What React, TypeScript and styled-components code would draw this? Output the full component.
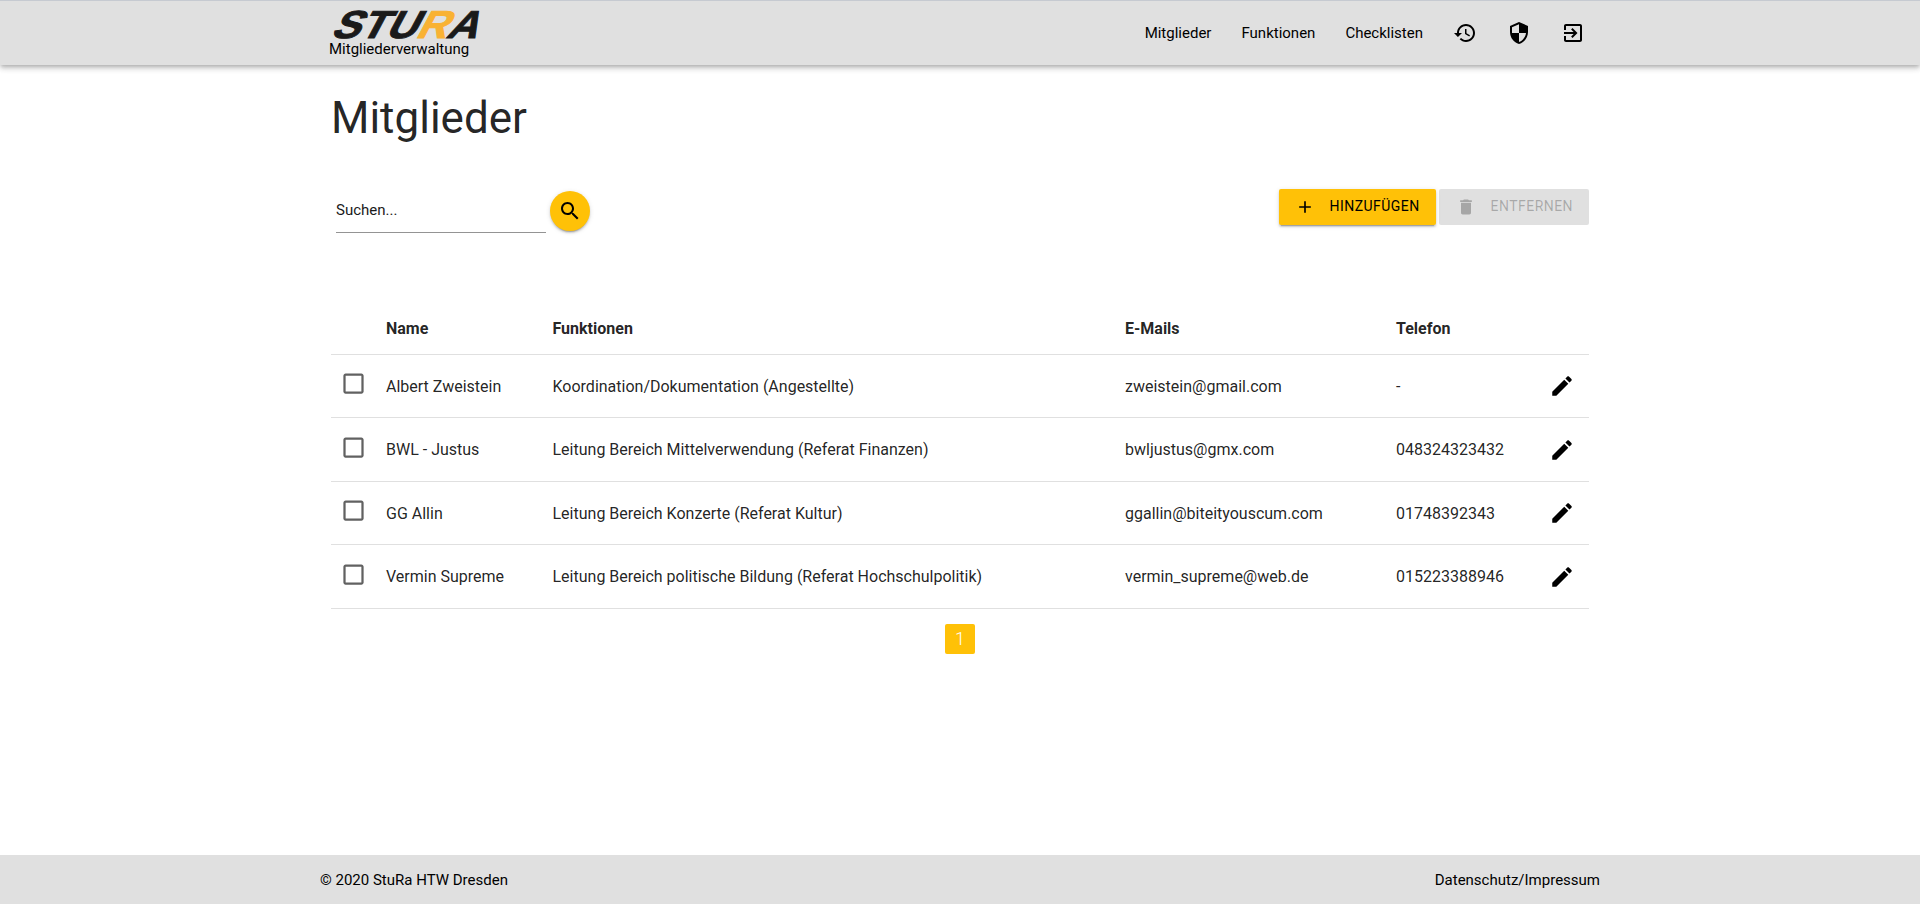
import React from "react";
import styled, { createGlobalStyle } from "styled-components";

const GlobalStyle = createGlobalStyle`
  html, body { margin: 0; padding: 0; }
  body { font-family: Roboto, "Liberation Sans", sans-serif; font-size: 16px; color: rgba(0,0,0,.87); background: #fff; }
  * { box-sizing: border-box; }
`;

const Page = styled.div`
  min-height: 904px;
  display: flex;
  flex-direction: column;
`;
const Header = styled.header`
  height: 65px;
  background: #e0e0e0;
  border-top: 1px solid #c6cad1;
  box-shadow: 0 2px 4px -1px rgba(0,0,0,.2), 0 4px 5px 0 rgba(0,0,0,.14), 0 1px 10px 0 rgba(0,0,0,.06);
  position: relative;
  z-index: 1;
`;
const HeaderInner = styled.div`
  width: 1280px;
  height: 100%;
  margin: 0 auto;
  display: flex;
  justify-content: space-between;
  align-items: flex-start;
`;
const Brand = styled.a`
  display: flex;
  flex-direction: column;
  padding: 9px 0 0 9px;
  color: #000;
`;
const BrandCaption = styled.span`
  font-size: 15px;
  line-height: 15px;
  color: #000;
`;
const LogoSvg = styled.svg`
  display: block;
  overflow: visible;
`;
const Nav = styled.nav`
  display: flex;
  align-items: center;
  height: 64px;
`;
const NavLink = styled.a`
  padding: 0 15px;
  font-size: 15px;
  color: #000;
  line-height: 20px;
`;
const NavIcon = styled.a`
  padding: 0 15px;
  display: flex;
  color: #000;
`;
const Main = styled.main`
  flex: 1;
  width: 1280px;
  margin: 0 auto;
  padding: 25px 10px 0;
`;
const Title = styled.h1`
  margin: 0 0 43px 1px;
  font-size: 44px;
  line-height: 56px;
  font-weight: 400;
  color: rgba(0,0,0,.87);
`;
const Toolbar = styled.div`
  display: flex;
  justify-content: space-between;
  align-items: flex-start;
  width: 1258px;
  height: 113px;
  margin-left: 1px;
`;
const SearchGroup = styled.div`
  display: flex;
  align-items: flex-start;
  padding: 2px 0 0 5px;
`;
const SearchField = styled.div`
  width: 210px;
  height: 42px;
  border-bottom: 1px solid #949494;
  display: flex;
  align-items: center;
  padding-bottom: 4px;
  font-size: 15px;
  color: #1a1a1a;
`;
const SearchButton = styled.button`
  width: 40px;
  height: 40px;
  margin-left: 4px;
  border: 0;
  padding: 0;
  border-radius: 50%;
  background: #ffc107;
  color: #000;
  display: flex;
  align-items: center;
  justify-content: center;
  box-shadow: 0 3px 1px -2px rgba(0,0,0,.2), 0 2px 2px 0 rgba(0,0,0,.14), 0 1px 5px 0 rgba(0,0,0,.12);
`;
const Actions = styled.div`
  display: flex;
  gap: 3px;
`;
const ActionButton = styled.button<{ $disabled?: boolean }>`
  height: 36px;
  padding: 0 16px 0 ${(p) => (p.$disabled ? 17 : 16)}px;
  border: 0;
  border-radius: 2px;
  display: flex;
  align-items: center;
  gap: 15px;
  font-family: Roboto, sans-serif;
  font-size: 14px;
  font-weight: 400;
  letter-spacing: .45px;
  text-transform: uppercase;
  background: ${(p) => (p.$disabled ? "rgba(0,0,0,.12)" : "#ffc107")};
  color: ${(p) => (p.$disabled ? "rgba(0,0,0,.26)" : "#000")};
  box-shadow: ${(p) =>
    p.$disabled
      ? "none"
      : "0 3px 1px -2px rgba(0,0,0,.2), 0 2px 2px 0 rgba(0,0,0,.14), 0 1px 5px 0 rgba(0,0,0,.12)"};
`;
const ButtonLabel = styled.span`
  margin-bottom: 2px;
`;
const Table = styled.table`
  width: 1258px;
  margin-left: 1px;
  table-layout: fixed;
  border-collapse: collapse;
`;
const HeadCell = styled.th<{ $w: number }>`
  width: ${(p) => p.$w}px;
  height: 52px;
  padding: 2px 16px 0;
  text-align: left;
  font-size: 16px;
  font-weight: 700;
  color: rgba(0,0,0,.87);
  border-bottom: 1px solid #e0e0e0;
`;
const Row = styled.tr`
  &:nth-child(odd) td { height: 63px; }
`;
const Cell = styled.td`
  height: 64px;
  padding: 1px 16px 0;
  font-size: 16px;
  color: rgba(0,0,0,.87);
  border-bottom: 1px solid #e0e0e0;
  vertical-align: middle;
`;
const CheckCell = styled(Cell)`
  padding: 0 0 4px 9px;
`;
const EditCell = styled(Cell)`
  padding: 1px 14px 0 0;
`;
const CheckIcon = styled.svg`
  display: block;
  color: #616161;
`;
const EditIcon = styled.svg`
  display: block;
  margin-left: auto;
  color: #000;
`;
const Pagination = styled.div`
  display: flex;
  justify-content: center;
  margin-top: 15px;
`;
const PageButton = styled.button`
  width: 30px;
  height: 30px;
  padding: 0;
  border: 0;
  border-radius: 2px;
  background: #ffc107;
  color: #fff;
  font-family: Roboto, sans-serif;
  font-size: 18px;
  font-weight: 300;
`;
const Footer = styled.footer`
  height: 49px;
  background: #e0e0e0;
`;
const FooterInner = styled.div`
  width: 1280px;
  height: 100%;
  margin: 0 auto;
  display: flex;
  align-items: center;
  justify-content: space-between;
  font-size: 15px;
  color: #000;
`;

const Icon = ({ d, size = 24, as: As = "svg" as any }: { d: string; size?: number; as?: any }) => (
  <As width={size} height={size} viewBox="0 0 24 24" fill="currentColor" aria-hidden="true">
    <path d={d} />
  </As>
);

const paths = {
  history:
    "M13 3c-4.97 0-9 4.03-9 9H1l3.89 3.89.07.14L9 12H6c0-3.87 3.13-7 7-7s7 3.13 7 7-3.13 7-7 7c-1.93 0-3.68-.79-4.94-2.06l-1.42 1.42C8.27 19.99 10.51 21 13 21c4.97 0 9-4.03 9-9s-4.03-9-9-9zm-1 5v5l4.28 2.54.72-1.21-3.5-2.08V8H12z",
  shield:
    "M12 1L3 5v6c0 5.55 3.84 10.74 9 12 5.16-1.26 9-6.45 9-12V5l-9-4zm0 10.99h7c-.53 4.12-3.28 7.79-7 8.94V12H5V6.3l7-3.11v8.8z",
  exit:
    "M10.09 15.59L11.5 17l5-5-5-5-1.41 1.41L12.67 11H3v2h9.67l-2.58 2.59zM19 3H5c-1.11 0-2 .9-2 2v4h2V5h14v14H5v-4H3v4c0 1.1.89 2 2 2h14c1.1 0 2-.9 2-2V5c0-1.1-.9-2-2-2z",
  search:
    "M15.5 14h-.79l-.28-.27C15.41 12.59 16 11.11 16 9.5 16 5.91 13.09 3 9.5 3S3 5.91 3 9.5 5.91 16 9.5 16c1.61 0 3.09-.59 4.23-1.57l.27.28v.79l5 4.99L20.49 19l-4.99-5zm-6 0C7.01 14 5 11.99 5 9.5S7.01 5 9.5 5 14 7.01 14 9.5 11.99 14 9.5 14z",
  add: "M19 13h-6v6h-2v-6H5v-2h6V5h2v6h6v2z",
  del: "M6 19c0 1.1.9 2 2 2h8c1.1 0 2-.9 2-2V7H6v12zM19 4h-3.5l-1-1h-5l-1 1H5v2h14V4z",
  edit:
    "M3 17.25V21h3.75L17.81 9.94l-3.75-3.75L3 17.25zM20.71 7.04c.39-.39.39-1.02 0-1.41l-2.34-2.34c-.39-.39-1.02-.39-1.41 0l-1.83 1.83 3.75 3.75 1.83-1.83z",
  box:
    "M19 5v14H5V5h14m0-2H5c-1.1 0-2 .9-2 2v14c0 1.1.9 2 2 2h14c1.1 0 2-.9 2-2V5c0-1.1-.9-2-2-2z",
};

const members = [
  { name: "Albert Zweistein", fn: "Koordination/Dokumentation (Angestellte)", mail: "zweistein@gmail.com", tel: "-" },
  { name: "BWL - Justus", fn: "Leitung Bereich Mittelverwendung (Referat Finanzen)", mail: "bwljustus@gmx.com", tel: "048324323432" },
  { name: "GG Allin", fn: "Leitung Bereich Konzerte (Referat Kultur)", mail: "ggallin@biteityouscum.com", tel: "01748392343" },
  { name: "Vermin Supreme", fn: "Leitung Bereich politische Bildung (Referat Hochschulpolitik)", mail: "vermin_supreme@web.de", tel: "015223388946" },
];

const Logo = () => (
  <LogoSvg width="150" height="32" viewBox="0 0 150 32">
    <g transform="translate(0 28) skewX(-28)">
      <text
        x="1"
        y="0"
        fontFamily="'Liberation Sans', sans-serif"
        fontWeight="700"
        fontSize="39"
        textLength="146"
        lengthAdjust="spacingAndGlyphs"
        fill="#1a1a1a"
        stroke="#1a1a1a"
        strokeWidth="1"
        strokeLinejoin="miter"
      >
        STU<tspan fill="#f9b233" stroke="#f9b233">R</tspan>A
      </text>
    </g>
  </LogoSvg>
);

export default function App() {
  return (
    <Page>
      <GlobalStyle />
      <Header>
        <HeaderInner>
          <Brand>
            <Logo />
            <BrandCaption>Mitgliederverwaltung</BrandCaption>
          </Brand>
          <Nav>
            <NavLink>Mitglieder</NavLink>
            <NavLink>Funktionen</NavLink>
            <NavLink>Checklisten</NavLink>
            <NavIcon><Icon d={paths.history} /></NavIcon>
            <NavIcon><Icon d={paths.shield} /></NavIcon>
            <NavIcon><Icon d={paths.exit} /></NavIcon>
          </Nav>
        </HeaderInner>
      </Header>
      <Main>
        <Title>Mitglieder</Title>
        <Toolbar>
          <SearchGroup>
            <SearchField>Suchen...</SearchField>
            <SearchButton><Icon d={paths.search} /></SearchButton>
          </SearchGroup>
          <Actions>
            <ActionButton><Icon d={paths.add} size={20} /><ButtonLabel>Hinzufügen</ButtonLabel></ActionButton>
            <ActionButton $disabled><Icon d={paths.del} size={20} /><ButtonLabel>Entfernen</ButtonLabel></ActionButton>
          </Actions>
        </Toolbar>
        <Table>
          <thead>
            <tr>
              <HeadCell $w={39} />
              <HeadCell $w={166.5}>Name</HeadCell>
              <HeadCell $w={572.5}>Funktionen</HeadCell>
              <HeadCell $w={271}>E-Mails</HeadCell>
              <HeadCell $w={150}>Telefon</HeadCell>
              <HeadCell $w={59} />
            </tr>
          </thead>
          <tbody>
            {members.map((m) => (
              <Row key={m.name}>
                <CheckCell><Icon as={CheckIcon} size={27} d={paths.box} /></CheckCell>
                <Cell>{m.name}</Cell>
                <Cell>{m.fn}</Cell>
                <Cell>{m.mail}</Cell>
                <Cell>{m.tel}</Cell>
                <EditCell><Icon as={EditIcon} size={26} d={paths.edit} /></EditCell>
              </Row>
            ))}
          </tbody>
        </Table>
        <Pagination><PageButton>1</PageButton></Pagination>
      </Main>
      <Footer>
        <FooterInner>
          <span>© 2020 StuRa HTW Dresden</span>
          <span>Datenschutz/Impressum</span>
        </FooterInner>
      </Footer>
    </Page>
  );
}
